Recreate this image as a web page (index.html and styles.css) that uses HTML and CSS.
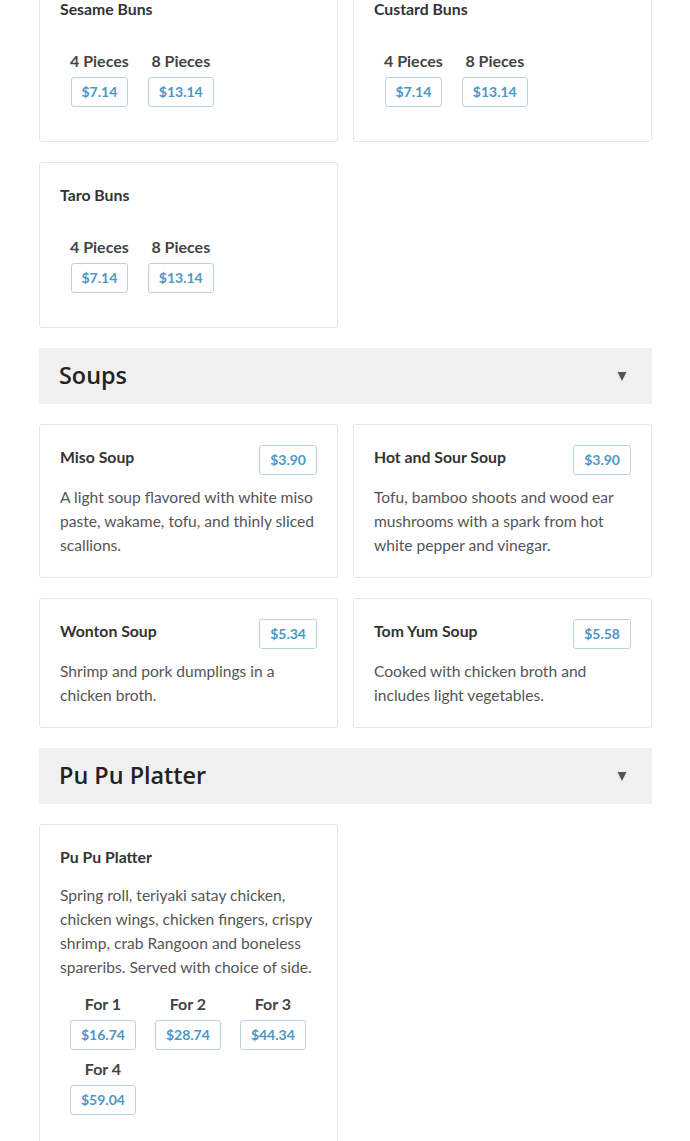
FILE: index.html
```html
<!DOCTYPE html>
<html>
<head>
<meta charset="utf-8">
<link rel="stylesheet" href="styles.css">
</head>
<body>
<div class="menu">
  <div class="grid grid-first">
    <div class="card">
      <div class="title">Sesame Buns</div>
      <div class="options options-gap">
        <div class="option"><div class="label">4 Pieces</div><div class="price">$7.14</div></div>
        <div class="option"><div class="label">8 Pieces</div><div class="price">$13.14</div></div>
      </div>
    </div>
    <div class="card">
      <div class="title">Custard Buns</div>
      <div class="options options-gap">
        <div class="option"><div class="label">4 Pieces</div><div class="price">$7.14</div></div>
        <div class="option"><div class="label">8 Pieces</div><div class="price">$13.14</div></div>
      </div>
    </div>
    <div class="card">
      <div class="title">Taro Buns</div>
      <div class="options options-gap">
        <div class="option"><div class="label">4 Pieces</div><div class="price">$7.14</div></div>
        <div class="option"><div class="label">8 Pieces</div><div class="price">$13.14</div></div>
      </div>
    </div>
  </div>

  <div class="section-head">
    <h2 class="section-title">Soups</h2>
    <svg class="arrow" width="10" height="10" viewBox="0 0 10 10"><polygon points="0.5,1 9.5,1 5,10" fill="#555"/></svg>
  </div>

  <div class="grid">
    <div class="card">
      <div class="head-row">
        <div class="title">Miso Soup</div>
        <div class="price">$3.90</div>
      </div>
      <p class="desc">A light soup flavored with white miso paste, wakame, tofu, and thinly sliced scallions.</p>
    </div>
    <div class="card">
      <div class="head-row">
        <div class="title">Hot and Sour Soup</div>
        <div class="price">$3.90</div>
      </div>
      <p class="desc">Tofu, bamboo shoots and wood ear mushrooms with a spark from hot white pepper and vinegar.</p>
    </div>
    <div class="card">
      <div class="head-row">
        <div class="title">Wonton Soup</div>
        <div class="price">$5.34</div>
      </div>
      <p class="desc">Shrimp and pork dumplings in a chicken broth.</p>
    </div>
    <div class="card">
      <div class="head-row">
        <div class="title">Tom Yum Soup</div>
        <div class="price">$5.58</div>
      </div>
      <p class="desc">Cooked with chicken broth and includes light vegetables.</p>
    </div>
  </div>

  <div class="section-head">
    <h2 class="section-title">Pu Pu Platter</h2>
    <svg class="arrow" width="10" height="10" viewBox="0 0 10 10"><polygon points="0.5,1 9.5,1 5,10" fill="#555"/></svg>
  </div>

  <div class="grid">
    <div class="card">
      <div class="title title-solo">Pu Pu Platter</div>
      <p class="desc">Spring roll, teriyaki satay chicken, chicken wings, chicken fingers, crispy shrimp, crab Rangoon and boneless spareribs. Served with choice of side.</p>
      <div class="options options-after-desc">
        <div class="option"><div class="label">For 1</div><div class="price">$16.74</div></div>
        <div class="option"><div class="label">For 2</div><div class="price">$28.74</div></div>
        <div class="option"><div class="label">For 3</div><div class="price">$44.34</div></div>
        <div class="option"><div class="label">For 4</div><div class="price">$59.04</div></div>
      </div>
    </div>
  </div>
</div>
</body>
</html>
```

FILE: styles.css
```css
* { box-sizing: border-box; }
html, body { margin: 0; padding: 0; background: #fff; }
body {
  font-family: Lato, "Liberation Sans", sans-serif;
  color: #333;
}
.menu {
  width: 613px;
  margin-left: 39px;
}
.grid {
  display: grid;
  grid-template-columns: 1fr 1fr;
  column-gap: 15px;
  row-gap: 20px;
  align-items: start;
  margin-bottom: 20px;
}
.grid-first { margin-top: -24px; }
.card {
  border: 1px solid #e6e6e6;
  border-radius: 3px;
  padding: 20px;
  background: #fff;
}
.title {
  font-size: 15.8px;
  font-weight: 700;
  line-height: 24px;
  color: #333;
}
.title-solo { margin-bottom: 14px; }
.head-row {
  display: flex;
  justify-content: space-between;
  align-items: flex-start;
}
.desc {
  margin: 10px 0 0;
  font-size: 15.6px;
  line-height: 24px;
  color: #555;
}
.title-solo + .desc { margin-top: 0; }
.options {
  display: flex;
  flex-wrap: wrap;
  padding-bottom: 5px;
  padding-left: 0.5px;
}
.options-gap { margin-top: 30px; }
.options-after-desc { margin-top: 15px; }
.option {
  margin: 0 9.5px 9px;
  display: flex;
  flex-direction: column;
  align-items: center;
}
.label {
  font-size: 16px;
  font-weight: 700;
  line-height: 20px;
  color: #444;
  margin-bottom: 6px;
}
.price {
  height: 30px;
  line-height: 28px;
  padding: 0 10px;
  border: 1px solid #b9d4e1;
  border-radius: 3px;
  font-size: 14px;
  font-weight: 700;
  color: #4d97c6;
  white-space: nowrap;
}
.section-head {
  display: flex;
  align-items: center;
  justify-content: space-between;
  height: 56px;
  padding: 0 25px 3px 20px;
  background: #f0f0f0;
  border-radius: 3px;
  margin-bottom: 20px;
}
.section-title {
  margin: 0;
  font-family: "Open Sans", "Noto Sans", sans-serif;
  font-size: 23.4px;
  font-weight: 600;
  color: #222;
}
.arrow { display: block; margin-top: 3px; }
```
